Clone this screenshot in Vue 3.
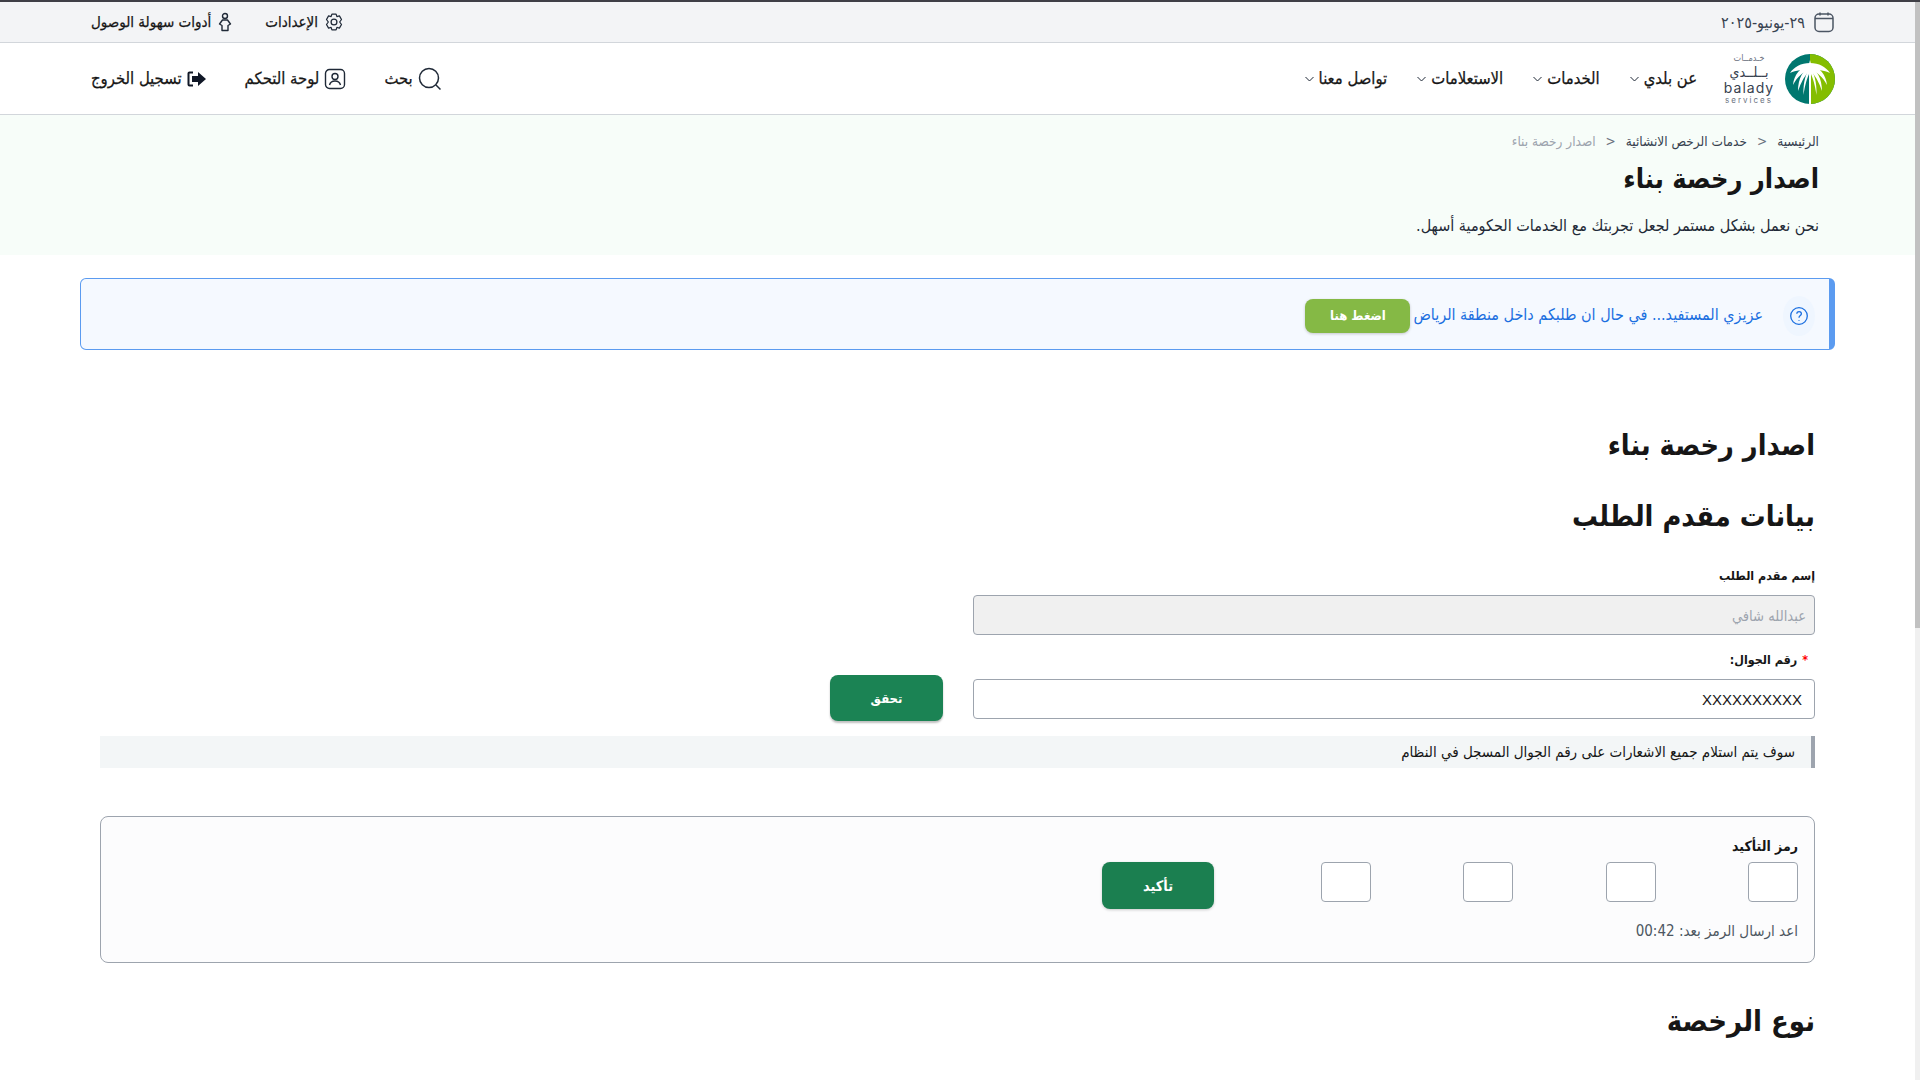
<template>
  <div class="page" dir="rtl">
    <div class="topbar">
      <div class="date">
        <svg width="22" height="22" viewBox="0 0 22 22" fill="none" stroke="#4b5563" stroke-width="1.5"><rect x="2" y="3" width="18" height="17.500" rx="4"/><path d="M2 7.500h18M7 1.500v3M15 1.500v3"/></svg>
        <span>٢٩-يونيو-٢٠٢٥</span>
      </div>
      <div class="tools">
        <span class="tool"><svg width="20" height="20" viewBox="0 0 24 24" fill="none" stroke="#1f2937" stroke-width="1.5" stroke-linejoin="round"><path d="M9.500 2.500h5l1 3 3-.8 2.500 4.300-2.200 3 2.200 3-2.500 4.300-3-.8-1 3h-5l-1-3-3 .8L3 15l2.200-3L3 9l2.500-4.300 3 .8z"/><circle cx="12" cy="12" r="3.500"/></svg>الإعدادات</span>
        <span class="tool"><svg width="16" height="20" viewBox="0 0 16 20" fill="none" stroke="#1f2937" stroke-width="1.4" stroke-linejoin="round"><circle cx="8" cy="4" r="2.500"/><path d="M5.500 8h5l3 4-2.500 1.500V18.500H5v-5L2.500 12z"/></svg>أدوات سهولة الوصول</span>
      </div>
    </div>
    <header class="nav">
      <div class="nav-main">
        <div class="logo">
          <svg width="50" height="50" viewBox="0 0 50 50">
            <circle cx="25" cy="25" r="25" fill="#00776f"/>
            <path d="M25 0a25 25 0 0 1 0 50z" fill="#84bd00"/>
            <g fill="#fff">
              <path d="M24 10l1-4 1 4v40h-2z"/>
              <g v-for="t in ['', 'matrix(-1 0 0 1 50 0)']" :key="t" :transform="t">
                <path d="M25 9C16 9 9 13 5 19c6-3 13-3 20-5z"/>
                <path d="M25 11C15 13 9 21 8 31c4-8 10-13 17-16z"/>
                <path d="M25 12c-7 4-12 13-12 25 3-9 7-16 12-21z"/>
                <path d="M25 13c-4 6-7 15-6.500 28C20 31 22 24 25 18z"/>
              </g>
            </g>
          </svg>
          <div class="logo-text"><i>خـدمــات</i><b>بــلــدي</b><em>balady</em><small>services</small></div>
        </div>
        <nav class="menu">
          <a v-for="m in menu" :key="m">{{ m }}<svg width="9" height="6" viewBox="0 0 9 6" fill="none" stroke="#1f2937"><path d="M.5 1l4 4 4-4"/></svg></a>
        </nav>
      </div>
      <div class="actions">
        <a class="search"><svg width="24" height="24" viewBox="0 0 24 24" fill="none" stroke="#1f2937" stroke-width="1.500"><circle cx="11" cy="11" r="9.500"/><path d="M18 18l4.500 4.500"/></svg>بحث</a>
        <a class="dash"><svg width="22" height="22" viewBox="0 0 22 22" fill="none" stroke="#1f2937" stroke-width="1.400"><rect x="1.500" y="1.500" width="19" height="19" rx="4"/><circle cx="11" cy="8.500" r="3"/><path d="M5.500 17c.8-3 3-4 5.500-4s4.700 1 5.500 4"/></svg>لوحة التحكم</a>
        <a class="out"><svg width="20" height="16" viewBox="0 0 20 16"><path d="M11 1l8 7-8 7v-4H5V5h6z" fill="#111827"/><path d="M6 1.500H2.500a1 1 0 0 0-1 1v11a1 1 0 0 0 1 1H6" fill="none" stroke="#111827" stroke-width="2"/></svg>تسجيل الخروج</a>
      </div>
    </header>
    <section class="hero">
      <div class="crumbs"><span>الرئيسية</span><i>&lt;</i><span>خدمات الرخص الانشائية</span><i>&lt;</i><span class="cur">اصدار رخصة بناء</span></div>
      <h1>اصدار رخصة بناء</h1>
      <p>نحن نعمل بشكل مستمر لجعل تجربتك مع الخدمات الحكومية أسهل.</p>
    </section>
    <div class="alert">
      <span class="q"><svg width="20" height="20" viewBox="0 0 20 20" fill="none" stroke="#1b6fe0" stroke-width="1.300"><circle cx="10" cy="10" r="8.300"/><path d="M7.800 7.800c0-3 4.600-3 4.600 0 0 1.800-2.400 1.800-2.400 4M10 14v.8"/></svg></span>
      <span class="alert-text">عزيزي المستفيد... في حال ان طلبكم داخل منطقة الرياض</span>
      <button class="press">اضغط هنا</button>
    </div>
    <main class="main">
      <h2 class="t1">اصدار رخصة بناء</h2>
      <h2 class="t2">بيانات مقدم الطلب</h2>
      <label class="lab lab1">إسم مقدم الطلب</label>
      <div class="inp disabled">عبدالله شافي</div>
      <label class="lab lab2"><b>*</b>رقم الجوال:</label>
      <div class="row">
        <div class="inp mobile">XXXXXXXXXX</div>
        <button class="verify">تحقق</button>
      </div>
      <div class="note">سوف يتم استلام جميع الاشعارات على رقم الجوال المسجل في النظام</div>
      <div class="otp">
        <div class="otp-label">رمز التأكيد</div>
        <div class="otp-row">
          <span class="box"></span><span class="box"></span><span class="box"></span><span class="box"></span>
          <button class="confirm">تأكيد</button>
        </div>
        <div class="resend">اعد ارسال الرمز بعد: 00:42</div>
      </div>
      <h2 class="t3">نوع الرخصة</h2>
    </main>
    <div class="scroll"><div class="thumb"></div></div>
  </div>
</template>

<script setup>
const menu = ['عن بلدي', 'الخدمات', 'الاستعلامات', 'تواصل معنا']
</script>

<style>
html, body { margin: 0; overflow: hidden; height: 1080px; background: #fff; }
</style>
<style scoped>
.page { position: relative; width: 1920px; height: 1080px; overflow: hidden; box-sizing: border-box; border-top: 2px solid #3f3f46; padding-right: 5px; font-family: "DejaVu Sans Condensed", "DejaVu Sans", sans-serif; font-stretch: condensed; color: #161616; }
button { font-family: inherit; font-stretch: condensed; }
.topbar { height: 41px; box-sizing: border-box; background: #f3f4f6; border-bottom: 1px solid #d2d6db; display: flex; align-items: center; justify-content: space-between; padding: 0 80px 0 91px; font-size: 15px; }
.date { display: flex; align-items: center; gap: 8px; color: #384250; font-size: 16px; }
.tools { display: flex; gap: 32px; -webkit-text-stroke: .25px #161616; }
.tool { display: flex; align-items: center; gap: 6px; }
.nav { height: 72px; box-sizing: border-box; border-bottom: 1px solid #d2d6db; display: flex; align-items: center; justify-content: space-between; padding: 0 80px 0 91px; background: #fff; }
.nav-main { display: flex; align-items: center; gap: 27px; }
.logo { display: flex; align-items: center; gap: 11px; }
.logo-text { display: flex; flex-direction: column; align-items: center; width: 50px; color: #6c737f; line-height: 1; }
.logo-text i { font-style: normal; font-size: 9px; line-height: 11px; letter-spacing: 0; }
.logo-text b { font-weight: 400; font-size: 14px; line-height: 16px; color: #384250; }
.logo-text em { font-style: normal; font-size: 14px; line-height: 15px; direction: ltr; color: #384250; letter-spacing: 1px; font-family: "Inter", sans-serif; font-stretch: normal; }
.logo-text small { font-size: 8px; line-height: 10px; letter-spacing: 2px; direction: ltr; font-family: "Inter", sans-serif; font-stretch: normal; }
.menu { display: flex; gap: 30px; font-size: 16.500px; -webkit-text-stroke: .25px #161616; }
.menu a { display: flex; align-items: center; gap: 5px; }
.actions { display: flex; align-items: center; gap: 38px; font-size: 16.500px; -webkit-text-stroke: .25px #161616; }
.actions a { display: flex; align-items: center; gap: 5px; }
.hero { height: 140px; box-sizing: border-box; background: #f7fdf9; padding: 18px 96px 0; }
.crumbs { display: flex; gap: 10px; font-size: 13.500px; color: #384250; height: 16px; align-items: center; }
.crumbs i { font-style: normal; color: #6c737f; }
.crumbs .cur { color: #9da4ae; }
.hero h1 { margin: 10px 0 0; font-size: 27px; line-height: 40px; font-weight: 700; }
.hero p { margin: 17px 0 0; font-size: 16px; line-height: 20px; color: #1f2a37; }
.alert { margin: 23px 80px 0; height: 72px; box-sizing: border-box; background: #f5f9ff; border: 1px solid #5b9bf0; border-right: 6px solid #5b9bf0; border-radius: 6px; display: flex; align-items: center; padding: 0 14px 0 0; }
.q { width: 32px; height: 40px; flex: none; margin-top: 4px; display: flex; align-items: center; justify-content: center; background: #eff6ff; border-radius: 50%; margin-left: 20px; }
.alert-text { color: #1b6fe0; font-size: 16px; margin-left: 3px; }
.press { width: 105px; height: 34px; margin-top: 3px; border: 0; border-radius: 8px; background: #85b945; color: #fff; font-weight: 700; font-size: 13px; box-shadow: 0 1px 3px rgba(0,0,0,.2); }
.main { padding: 0 100px; }
.t1 { margin: 0; padding-top: 75px; font-size: 28.600px; line-height: 40px; }
.t2 { margin: 0; padding-top: 31px; font-size: 28.700px; line-height: 40px; }
.lab { display: block; font-size: 12.400px; font-weight: 700; line-height: 18px; }
.lab1 { margin-top: 31px; }
.lab2 { margin-top: 16px; padding-right: 7px; }
.lab2 b { color: #f00; margin-left: 5px; }
.inp { width: 842px; height: 40px; box-sizing: border-box; border: 1px solid #9da4ae; border-radius: 4px; display: flex; align-items: center; padding: 0 8px; font-size: 14.600px; }
.disabled { margin-top: 10px; background: #f0f0f0; color: #9da4ae; }
.row { display: flex; align-items: flex-start; gap: 30px; margin-top: 6px; }
.mobile { margin-top: 4px; padding: 0 12px; font-family: "Liberation Sans", sans-serif; font-stretch: normal; font-size: 15px; }
.verify { width: 113px; height: 46px; border: 0; border-radius: 8px; background: #1b8354; color: #fff; font-weight: 700; font-size: 13px; box-shadow: 0 2px 2px rgba(0,0,0,.25); }
.note { margin-top: 15px; height: 32px; background: #f3f6f7; border-right: 4px solid #9da4ae; display: flex; align-items: center; padding-right: 16px; font-size: 15px; }
.otp { margin-top: 48px; height: 147px; box-sizing: border-box; border: 1px solid #9da4ae; border-radius: 8px; background: #fcfcfd; padding: 19px 16px 0; }
.otp-label { font-size: 14px; font-weight: 700; line-height: 20px; }
.otp-row { display: flex; align-items: flex-start; gap: 92.500px; margin-top: 6px; }
.box { width: 50px; height: 40px; box-sizing: border-box; border: 1px solid #9da4ae; border-radius: 4px; background: #fff; }
.confirm { width: 112px; height: 47px; margin-right: 14px; border: 0; border-radius: 8px; background: #1b7f50; color: #fff; font-weight: 700; font-size: 14.400px; box-shadow: 0 1px 3px rgba(0,0,0,.2); }
.resend { margin-top: 12px; font-size: 15px; color: #4d5761; line-height: 20px; }
.t3 { margin: 0; padding-top: 38px; font-size: 29px; line-height: 40px; }
.scroll { position: absolute; top: 0; right: 0; width: 5px; height: 1080px; background: #f0f0f0; }
.thumb { height: 626px; background: #c1c1c1; }
</style>
